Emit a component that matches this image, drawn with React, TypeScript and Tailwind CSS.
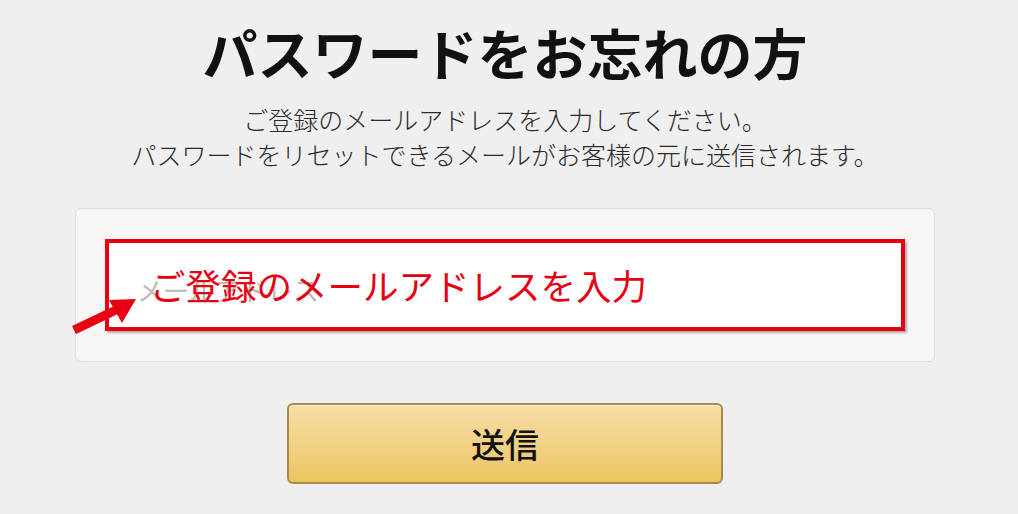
export default function App() {
  return (
    <div
      className="flex h-[514px] w-full flex-col items-center overflow-hidden bg-[#efefef] pr-[8px] text-[#111]"
      style={{ fontFamily: '"Noto Sans CJK JP", "Noto Sans", sans-serif' }}
    >
      <h1 className="pt-[16px] text-[55px] font-bold leading-[70px]">
        パスワードをお忘れの方
      </h1>
      <p className="mt-[16px] text-center text-[25px] font-light leading-[35px] text-[#2a2a2a]">
        ご登録のメールアドレスを入力してください。
        <br />
        パスワードをリセットできるメールがお客様の元に送信されます。
      </p>

      <div className="relative mt-[36px] h-[154px] w-[860px] rounded-md border border-[#dedede] bg-[#f7f6f5] px-[29px] pt-[30px]">
        <div className="relative h-[92px] w-[800px] border-[4px] border-[#e60012] bg-white shadow-[2px_2px_2px_rgba(0,0,0,0.3)]">
          <input
            className="h-full w-full bg-transparent pl-[28px] pt-[8px] text-[26px] text-[#333] outline-none placeholder:text-[#bbb]"
            placeholder="メールアドレス"
            type="email"
          />
          <span className="pointer-events-none absolute left-[41px] top-[18px] text-[35.5px] leading-[48px] text-[#e60012]">
            ご登録のメールアドレスを入力
          </span>
        </div>
        <svg
          className="absolute left-[-4px] top-[85px]"
          width="70"
          height="40"
          viewBox="0 0 70 40"
        >
          <path d="M2 36 L44 16" stroke="#e60012" strokeWidth="9" />
          <path d="M64 5 L37 6 L50 29 Z" fill="#e60012" />
        </svg>
      </div>

      <button className="mt-[41px] h-[81px] w-[436px] rounded-[6px] border-2 border-[#a88a4a] bg-gradient-to-b from-[#f6dfa6] to-[#ecc45f] text-[34px] font-medium text-[#111] shadow-[inset_0_1px_0_rgba(255,255,255,0.6)]">
        送信
      </button>
    </div>
  );
}
